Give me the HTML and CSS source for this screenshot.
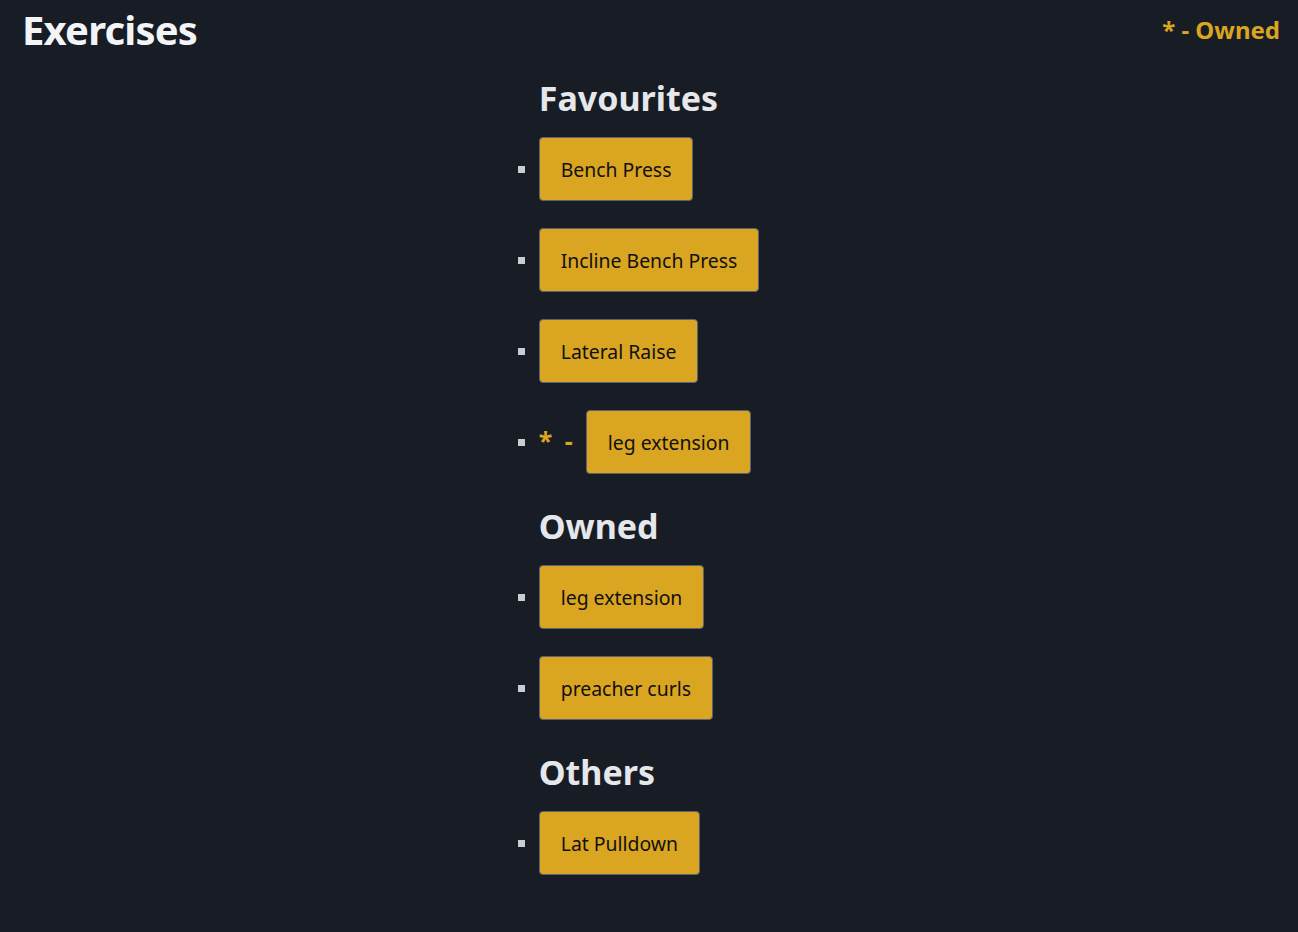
FILE: index.html
```html
<!DOCTYPE html>
<html lang="en">
<head>
<meta charset="utf-8">
<title>Exercises</title>
<link rel="stylesheet" href="styles.css">
</head>
<body>
<header class="topbar">
  <h1 class="title">Exercises</h1>
  <span class="legend">* - Owned</span>
</header>
<main class="content">
  <div class="column">
    <section class="group">
      <h2 class="group-title">Favourites</h2>
      <ul class="ex-list">
        <li class="ex-item"><button class="ex-btn">Bench Press</button></li>
        <li class="ex-item"><button class="ex-btn">Incline Bench Press</button></li>
        <li class="ex-item"><button class="ex-btn">Lateral Raise</button></li>
        <li class="ex-item"><span class="owned-mark">* -</span><button class="ex-btn">leg extension</button></li>
      </ul>
    </section>
    <section class="group">
      <h2 class="group-title">Owned</h2>
      <ul class="ex-list">
        <li class="ex-item"><button class="ex-btn">leg extension</button></li>
        <li class="ex-item"><button class="ex-btn">preacher curls</button></li>
      </ul>
    </section>
    <section class="group">
      <h2 class="group-title">Others</h2>
      <ul class="ex-list">
        <li class="ex-item"><button class="ex-btn">Lat Pulldown</button></li>
      </ul>
    </section>
  </div>
</main>
</body>
</html>
```
FILE: styles.css
```css
html, body {
  margin: 0;
  padding: 0;
}
body {
  background: #181c25;
  color: #e5e7eb;
  font-family: "Noto Sans", "Open Sans", sans-serif;
  min-height: 932px;
}
.topbar {
  display: flex;
  justify-content: space-between;
  align-items: flex-start;
  padding: 0 18px 0 22px;
}
.title {
  margin: 0;
  font-size: 40px;
  font-weight: 700;
  letter-spacing: -0.8px;
  line-height: 60px;
  color: #f3f4f6;
}
.legend {
  font-size: 24px;
  font-weight: 700;
  line-height: 60px;
  color: #daa520;
}
.content {
  display: flex;
  justify-content: center;
  padding-top: 16px;
}
.column {
  display: flex;
  flex-direction: column;
}
.group-title {
  margin: 0;
  font-size: 34px;
  font-weight: 700;
  line-height: 44px;
  color: #e5e7eb;
}
.group + .group .group-title {
  margin-top: 3px;
}
.ex-list {
  margin: 0;
  padding: 0;
  list-style: square outside;
  color: #c9ccd3;
}
.ex-item {
  font-size: 20px;
  margin: 17px 0 27px;
}
.owned-mark {
  font-size: 25px;
  font-weight: 700;
  word-spacing: 6px;
  color: #daa520;
  margin-right: 13px;
}
.ex-btn {
  display: inline-block;
  height: 64px;
  padding: 0 21px;
  font-family: inherit;
  font-size: 19.4px;
  color: #111;
  background: #daa520;
  border: 1px solid #5a6275;
  border-radius: 4px;
  cursor: pointer;
}
```
